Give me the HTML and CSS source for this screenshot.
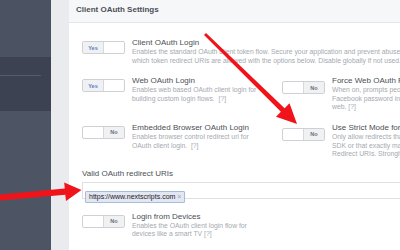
FILE: index.html
```html
<!DOCTYPE html>
<html lang="en">
<head>
  <meta charset="UTF-8" />
  <title>Client OAuth Settings</title>
  <link rel="stylesheet" href="styles.css">
</head>
<body>
  <div class="page">
    <nav class="sidebar">
      <div class="side-top"></div>
      <div class="side-band"><div class="side-line"></div></div>
      <div class="side-rest"></div>
    </nav>
    <div class="gutter"></div>

    <section class="card">
      <header class="card-head">Client OAuth Settings</header>
      <div class="card-body">

        <div class="setting wide">
          <div class="toggle yes"><span class="half on">Yes</span><span class="half"></span></div>
          <div class="text">
            <div class="title">Client OAuth Login</div>
            <div class="desc">Enables the standard OAuth client token flow. Secure your application and prevent abuse by locking down<br>which token redirect URIs are allowed with the options below. Disable globally if not used. [?]</div>
          </div>
        </div>

        <div class="grid">
          <div class="setting">
            <div class="toggle yes"><span class="half on">Yes</span><span class="half"></span></div>
            <div class="text">
              <div class="title">Web OAuth Login</div>
              <div class="desc">Enables web based OAuth client login for<br>building custom login flows. &nbsp;[?]</div>
            </div>
          </div>
          <div class="setting right">
            <div class="toggle no"><span class="half"></span><span class="half off">No</span></div>
            <div class="text">
              <div class="title">Force Web OAuth Reauthentication</div>
              <div class="desc">When on, prompts people to enter their<br>Facebook password in order to log in on the<br>web. [?]</div>
            </div>
          </div>
          <div class="setting">
            <div class="toggle no"><span class="half"></span><span class="half off">No</span></div>
            <div class="text">
              <div class="title">Embedded Browser OAuth Login</div>
              <div class="desc">Enables browser control redirect uri for<br>OAuth client login. &nbsp;[?]</div>
            </div>
          </div>
          <div class="setting right">
            <div class="toggle no"><span class="half"></span><span class="half off">No</span></div>
            <div class="text">
              <div class="title">Use Strict Mode for Redirect URIs</div>
              <div class="desc">Only allow redirects that use the Facebook<br>SDK or that exactly match the Valid OAuth<br>Redirect URIs. Strongly recommended. [?]</div>
            </div>
          </div>
        </div>

        <div class="field">
          <div class="label">Valid OAuth redirect URIs</div>
          <div class="input">
            <span class="token">https://www.nextscripts.com <span class="x">×</span></span>
          </div>
        </div>

        <div class="setting last">
          <div class="toggle no"><span class="half"></span><span class="half off">No</span></div>
          <div class="text">
            <div class="title">Login from Devices</div>
            <div class="desc">Enables the OAuth client login flow for<br>devices like a smart TV [?]</div>
          </div>
        </div>

      </div>
    </section>
  </div>

  <!-- red annotation arrows drawn over the screenshot -->
  <svg class="arrows" width="400" height="250" viewBox="0 0 400 250">
    <polygon points="204,35 206,33 284.6,108.2 289.5,103.2 297,124 276,116.8 280.9,111.8" fill="#f0141a"/>
    <polygon points="-2,194.6 -2,200.8 65.3,194.8 66,201 81.5,190 64.2,182.4 64.8,188.4" fill="#f0141a"/>
  </svg>
</body>
</html>
```

FILE: styles.css
```css
* {
  margin: 0;
  padding: 0;
  box-sizing: border-box;
}

body {
  width: 400px;
  height: 250px;
  overflow: hidden;
  position: relative;
  font-family: "Liberation Sans", Arial, sans-serif;
  background: #e9ebee;
}

.page {
  display: flex;
  height: 250px;
}

.sidebar {
  width: 51px;
  flex: none;
  display: flex;
  flex-direction: column;
  background: #4b5262;
}
.side-top {
  height: 57px;
}
.side-band {
  height: 54px;
  background: #3c4251;
  padding-top: 18px;
}
.side-line {
  width: 41px;
  height: 1px;
  background: #545b69;
}
.side-rest {
  flex: 1;
  background: #4d5464;
}

.gutter {
  width: 18px;
  flex: none;
  background: #e9ebee;
}

.card {
  width: 520px;
  flex: none;
  background: #fff;
}

.card-head {
  height: 23px;
  padding: 5px 0 0 7px;
  background: #f6f7f9;
  border-bottom: 1px solid #e5e6e9;
  font-size: 8px;
  font-weight: bold;
  line-height: 10px;
  color: #4b4f56;
}

.card-body {
  padding: 15px 0 0 13px;
}

.setting {
  display: flex;
  align-items: flex-start;
  gap: 7px;
}

.toggle {
  width: 43px;
  height: 13px;
  margin-top: 3px;
  flex: none;
  display: flex;
  border: 1px solid #ced0d4;
  border-radius: 2px;
  background: #fff;
  overflow: hidden;
}
.setting.right .toggle {
  margin-top: 5px;
}
.toggle .half {
  flex: 1;
  display: flex;
  align-items: center;
  justify-content: center;
  font-size: 5.5px;
  font-weight: bold;
}
.toggle .on {
  background: #f0f1f3;
  border-right: 1px solid #d6d8dc;
  color: #5b7bc0;
}
.toggle .off {
  background: #f0f1f3;
  border-left: 1px solid #d6d8dc;
  color: #6a6f78;
}

.text {
  white-space: nowrap;
}
.title {
  font-size: 8px;
  line-height: 10px;
  color: #4b4f56;
}
.desc {
  font-size: 6.8px;
  line-height: 8.6px;
  color: #a5a9b0;
}

.grid {
  display: grid;
  grid-template-columns: 200px 200px;
  row-gap: 11px;
  margin-top: 11px;
}

.field {
  margin-top: 10px;
}
.label {
  font-size: 8px;
  line-height: 10px;
  color: #4b4f56;
}
.input {
  height: 17px;
  margin-top: 3px;
  padding: 2px 0 0 2px;
  border: 1px solid #dddfe2;
  border-right: none;
}
.token {
  display: inline-block;
  height: 12px;
  padding: 0 3px;
  background: #e2e7f2;
  border: 1px solid #a8bbdc;
  border-radius: 1px;
  font-size: 7px;
  line-height: 10px;
  color: #1d2129;
}
.token .x {
  color: #9a9fa8;
}

.setting.last {
  margin-top: 13px;
}

.arrows {
  position: absolute;
  left: 0;
  top: 0;
  pointer-events: none;
}
```
